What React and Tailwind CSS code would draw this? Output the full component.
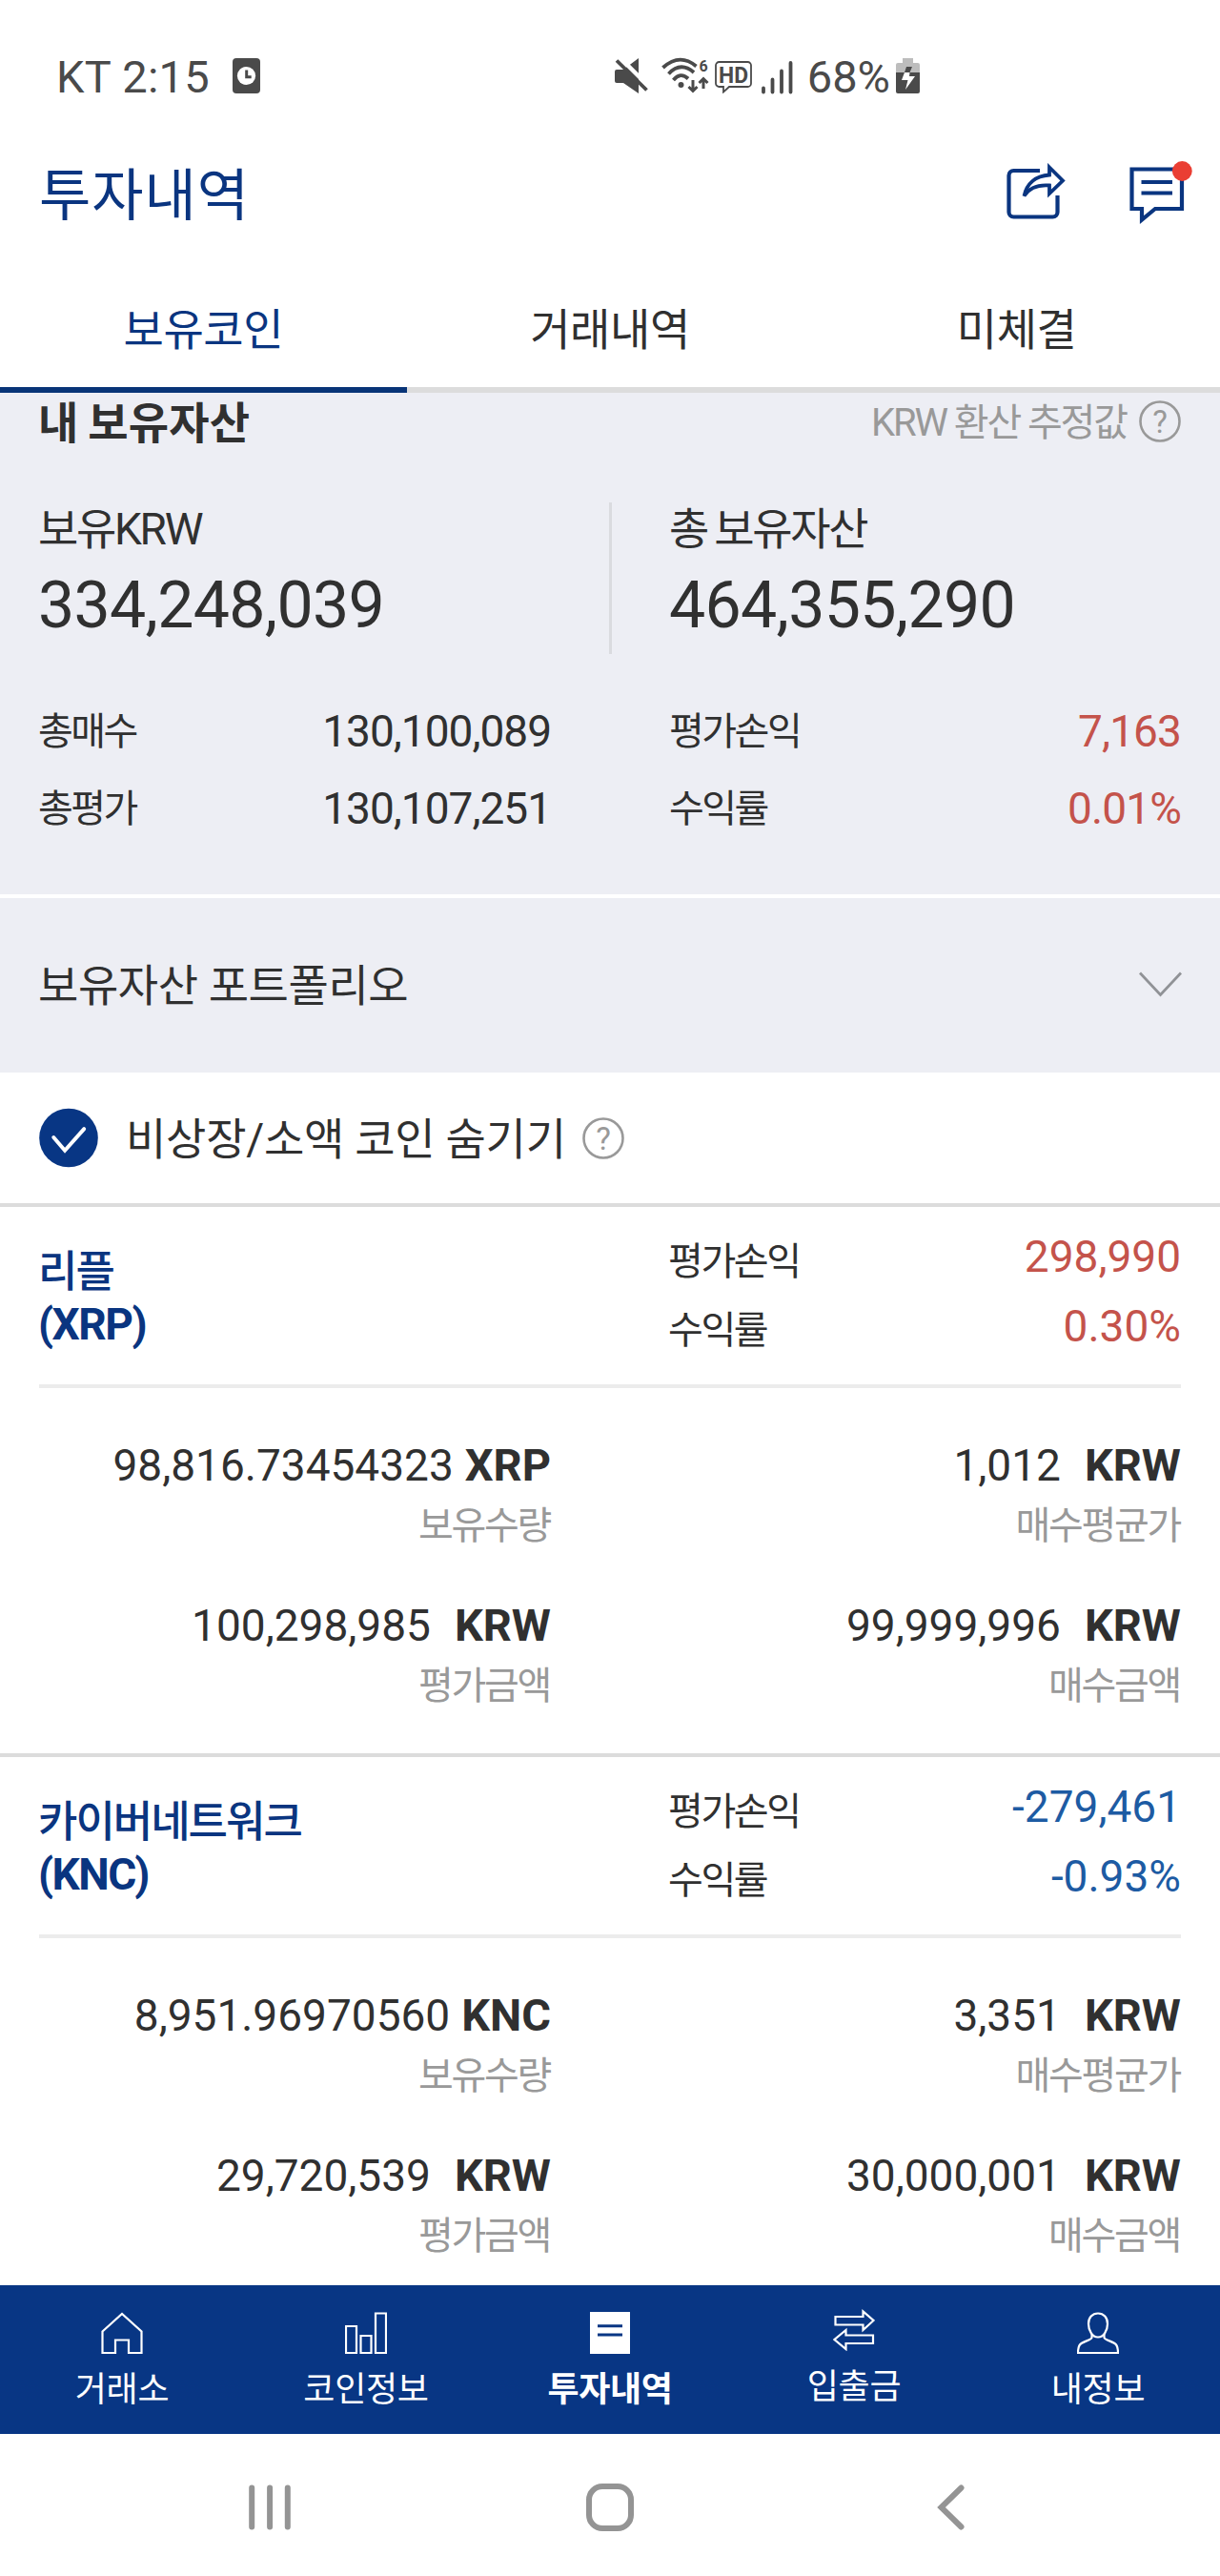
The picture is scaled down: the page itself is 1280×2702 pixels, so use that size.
const tabs = ['보유코인', '거래내역', '미체결']

const coins = [
  {
    name: '리플',
    symbol: 'XRP',
    profit: '298,990',
    rate: '0.30%',
    up: true,
    quantity: '98,816.73454323',
    avgPrice: '1,012',
    value: '100,298,985',
    cost: '99,999,996',
  },
  {
    name: '카이버네트워크',
    symbol: 'KNC',
    profit: '-279,461',
    rate: '-0.93%',
    up: false,
    quantity: '8,951.96970560',
    avgPrice: '3,351',
    value: '29,720,539',
    cost: '30,000,001',
  },
]

function StatusBar() {
  return (
    <div className="flex h-[162px] shrink-0 items-center pl-[59px] pr-[315px] text-[#4a4a4a]">
      <span className="pb-[2px] text-[47px] leading-none tracking-[0.3px]">KT 2:15</span>
      <svg className="ml-[24px] -mt-[3px]" width="29" height="37" viewBox="0 0 29 37">
        <rect width="29" height="37" rx="4" fill="currentColor" />
        <circle cx="14.5" cy="18.5" r="9.6" fill="#fff" />
        <path d="M14.7 12.5v7.2h5" fill="none" stroke="currentColor" strokeWidth="3" />
      </svg>

      <svg className="ml-auto -mt-[3px]" width="35" height="37" viewBox="0 0 35 37">
        <path d="M2 12h7L25 0v37L9 26H2a2 2 0 0 1-2-2V14a2 2 0 0 1 2-2Z" fill="currentColor" />
        <path d="M5-1l31 31" stroke="#fff" strokeWidth="4.5" />
        <path d="M2 2.5l31.5 31" stroke="currentColor" strokeWidth="3.8" />
      </svg>
      <svg className="ml-[14px] -mt-[3px] overflow-visible" width="50" height="37" viewBox="0 0 50 37">
        <g fill="none" stroke="currentColor" strokeWidth="3.8">
          <path d="M1.5 10Q19-6 36.5 8.5" />
          <path d="M7.5 16.5Q20 3 34 15" />
          <path d="M12.5 23Q20 14 28 21.5" />
        </g>
        <circle cx="20.5" cy="28" r="3" fill="currentColor" />
        <path d="M33 23v11M28.5 30l4.5 4.5 4.5-4.5M44 32V22M39.5 26l4.5-4.5 4.5 4.5" fill="none" stroke="currentColor" strokeWidth="3" />
        <text x="39.5" y="13.5" fontSize="16" fontWeight="700" fill="currentColor">6</text>
      </svg>
      <svg className="ml-[6px]" width="39" height="34" viewBox="0 0 39 34">
        <path d="M4.5 1h30a3.5 3.5 0 0 1 3.5 3.5v19a3.5 3.5 0 0 1-3.5 3.5H15l-6 5.500V27H4.5A3.5 3.5 0 0 1 1 23.5v-19A3.5 3.5 0 0 1 4.5 1Z" fill="none" stroke="currentColor" strokeWidth="1.8" />
        <text x="19.5" y="22.5" textAnchor="middle" fontSize="24" fontWeight="700" fill="currentColor" textLength="31" lengthAdjust="spacingAndGlyphs">HD</text>
      </svg>
      <svg className="ml-[10px]" width="33" height="35" viewBox="0 0 33 35" stroke="currentColor" strokeWidth="3.8" strokeLinecap="round">
        <path d="M2 28.5v4M11.5 19.5v13M21 10.5v22M30.5 2v30.5" />
      </svg>
      <span className="ml-[15px] mr-px pb-[2px] text-[47px] leading-none">68%</span>
      <svg className="ml-[5px] -mt-[3px]" width="25" height="37" viewBox="0 0 25 37">
        <path d="M7 0h11v5h5a2 2 0 0 1 2 2v8H0V7a2 2 0 0 1 2-2h5Z" fill="#bdbdbd" />
        <path d="M0 15h25v20a2 2 0 0 1-2 2H2a2 2 0 0 1-2-2Z" fill="currentColor" />
        <path d="M11 9h6l-2.5 6H9Z" fill="currentColor" />
        <path d="M9 15h5.5l-.5 4h6L10 33l2.5-10H6Z" fill="#fff" />
      </svg>
    </div>
  )
}

function Header() {
  return (
    <header className="flex h-[88px] shrink-0 items-center pl-[41px] pr-[29px] text-[#0a3580]">
      <h1 className="pb-[2px] text-[59px] leading-none tracking-[1px]">투자내역</h1>
      <svg className="ml-auto mb-[10px]" width="62" height="60" viewBox="0 0 62 60" fill="none" stroke="currentColor">
        <path d="M35 8H7.5a5 5 0 0 0-5 5v38.5a5 5 0 0 0 5 5h41a5 5 0 0 0 5-5V34" strokeWidth="4.2" />
        <path d="M45 4.5L59 18.5 45 32v-8.5C33 22.5 24 26 18.5 34.5 21 22 30 13.5 45 12.5Z" strokeWidth="3.8" />
      </svg>
      <svg className="ml-[66px] mb-[8px]" width="67" height="66" viewBox="0 0 67 66" fill="none" stroke="currentColor" strokeWidth="4.2">
        <path d="M3.5 8.5h52.5v41.5h-28L14 61.5V50H3.5Z" />
        <path d="M13.5 22H46M13.5 33.5H46" />
        <circle cx="56.3" cy="10.5" r="10.4" fill="#ea3e33" stroke="none" />
      </svg>
    </header>
  )
}

function Tabs() {
  return (
    <div className="mt-[37px] grid shrink-0 grid-cols-3 text-center text-[46px] leading-[118px] tracking-[-0.4px]">
      {tabs.map((tab, i) => (
        <div
          key={tab}
          className={i === 0 ? 'border-b-[6px] border-[#083477] pb-px text-[#0a3580]' : 'border-b-[6px] border-[#dcdcdc] pb-px'}
        >
          {tab}
        </div>
      ))}
    </div>
  )
}

function Help() {
  return (
    <svg width="44" height="44" viewBox="0 0 44 44" className="text-[#999]">
      <circle cx="22" cy="22" r="20.5" fill="none" stroke="currentColor" strokeWidth="2.6" />
      <text x="22" y="34" textAnchor="middle" fontSize="33" fill="currentColor">?</text>
    </svg>
  )
}

function Row({ label, value, red }) {
  return (
    <div className="flex h-[81px] items-center justify-between">
      <span className="text-[40px] tracking-[-2.5px]">{label}</span>
      <span className={red ? 'pr-px text-[46px] tracking-[-0.9px] text-[#c4534b]' : 'text-[46px] tracking-[-1px]'}>{value}</span>
    </div>
  )
}

function Total({ label, value }) {
  return (
    <div className="w-[538px] pt-[2px]">
      <p className="text-[46px] leading-[52px] tracking-[-2.3px] [word-spacing:-2px]">{label}</p>
      <p className="mt-[14px] text-[68px] leading-[80px] tracking-[-0.7px]">{value}</p>
    </div>
  )
}

function Summary() {
  return (
    <section className="shrink-0 border-b-4 border-white bg-[#edeef4] px-10 pb-[49px]">
      <div className="flex h-[65px] items-center">
        <h2 className="pb-[2px] text-[46px] font-bold leading-none tracking-[0.2px] [word-spacing:-2px]">내 보유자산</h2>
        <span className="ml-auto mr-[13px] pb-[2px] text-[40px] leading-none tracking-[-2.1px] text-[#999]">KRW 환산 추정값</span>
        <div className="mr-px mb-[6px]">
          <Help />
        </div>
      </div>
      <div className="mt-[50px] flex h-[159px] justify-between">
        <Total label="보유KRW" value="334,248,039" />
        <div className="w-[3px] bg-[#dadbdf]" />
        <Total label="총 보유자산" value="464,355,290" />
      </div>
      <div className="mt-[41px] flex justify-between">
        <div className="w-[538px]">
          <Row label="총매수" value="130,100,089" />
          <Row label="총평가" value="130,107,251" />
        </div>
        <div className="w-[538px]">
          <Row label="평가손익" value="7,163" red />
          <Row label="수익률" value="0.01%" red />
        </div>
      </div>
    </section>
  )
}

function Amount({ value, unit, label }) {
  return (
    <div className="w-[537px] text-right">
      <p className="text-[46px] leading-[60px]">
        {value}
        <b className={unit === 'KRW' ? 'ml-[25px] text-[47px]' : 'ml-[12px] text-[47px]'}>{unit}</b>
      </p>
      <p className="mt-[10px] pr-px text-[40px] leading-[48px] tracking-[-2.3px] text-[#999]">{label}</p>
    </div>
  )
}

function Coin({ coin }) {
  return (
    <section className="shrink-0 border-t-4 border-[#dcdcdc] px-[41px] pb-[46px]">
      <div className="flex h-[190px] justify-between border-b-4 border-[#ececec]">
        <div className="-ml-px pt-[42px] font-bold leading-[54px] text-[#0a3580]">
          <p className="text-[45px] font-medium tracking-[-2px]">{coin.name}</p>
          <p className="text-[46px] tracking-[-1.5px]">({coin.symbol})</p>
        </div>
        <div className="flex w-[538px] justify-between leading-[72px]">
          <div className="pt-[22px] text-[40px] tracking-[-2.4px]">
            <p>평가손익</p>
            <p>수익률</p>
          </div>
          <div className={coin.up ? 'pt-[16px] text-right text-[46px] text-[#c4534b]' : 'pt-[16px] text-right text-[46px] text-[#1d5ba3]'}>
            <p>{coin.profit}</p>
            <p className="pt-px">{coin.rate}</p>
          </div>
        </div>
      </div>
      <div className="flex flex-wrap justify-between gap-y-[50px] pt-[51px]">
        <Amount value={coin.quantity} unit={coin.symbol} label="보유수량" />
        <Amount value={coin.avgPrice} unit="KRW" label="매수평균가" />
        <Amount value={coin.value} unit="KRW" label="평가금액" />
        <Amount value={coin.cost} unit="KRW" label="매수금액" />
      </div>
    </section>
  )
}

function NavItem({ label, active, raised, children }) {
  return (
    <div className={raised ? '-mt-[3px] flex flex-1 flex-col items-center' : 'flex flex-1 flex-col items-center'}>
      <svg width="44" height="44" viewBox="0 0 44 44" fill="none" stroke="currentColor" strokeWidth="2.2">
        {children}
      </svg>
      <span className={active ? 'mt-[18px] text-[36px] font-bold leading-[40px] tracking-[-0.4px]' : 'mt-[18px] text-[36px] leading-[40px] tracking-[-0.3px]'}>
        {label}
      </span>
    </div>
  )
}

function BottomNav() {
  return (
    <nav className="flex h-[156px] shrink-0 bg-[#083684] pt-[28px] text-white">
      <NavItem label="거래소">
        <path d="M1.5 20.5L22 2l20.5 18.5V43H29V29.5H15V43H1.5Z" />
      </NavItem>
      <NavItem label="코인정보">
        <path d="M1 15h11v28H1ZM16.5 25h11v18h-11ZM32 1.5h11V43H32Z" />
      </NavItem>
      <NavItem label="투자내역" active>
        <path d="M1 0h42v44H1Z" fill="currentColor" stroke="none" />
        <path d="M9 14.7h26M9 24h26" stroke="#083684" strokeWidth="3" />
      </NavItem>
      <NavItem label="입출금" raised>
        <path d="M2.5 8h29V2.5L42.5 12l-11 10v-5.5h-29ZM42 27.5H13.5V22L1.5 32l12 10v-6H42Z" />
      </NavItem>
      <NavItem label="내정보">
        <path d="M22 1.5c-6 0-10 4.5-10 11 0 7 4 14 10 14s10-7 10-14c0-6.5-4-11-10-11Z" />
        <path d="M15.5 23v4c0 2-7 3.5-11 6C2 34.5 1 37 1 43h42c0-6-1-8.5-3.5-10-4-2.5-11-4-11-6v-4" />
      </NavItem>
    </nav>
  )
}

function SystemNav() {
  return (
    <div className="flex h-[149px] shrink-0 items-center pt-[4px] pl-[261px] pr-[268px] text-[#949494]">
      <svg width="44" height="48" viewBox="0 0 44 48" stroke="currentColor" strokeWidth="6" strokeLinecap="round">
        <path d="M3.2 3.5v41M22.1 3.5v41M40.8 3.5v41" />
      </svg>
      <div className="ml-[310px] h-[50px] w-[50px] rounded-[17px] border-[6px] border-current" />
      <svg className="ml-auto" width="29" height="48" viewBox="0 0 29 48" fill="none" stroke="currentColor" strokeWidth="6" strokeLinecap="round">
        <path d="M25.5 3.5L4.5 24l21 20.5" />
      </svg>
    </div>
  )
}

export default function App() {
  return (
    <div className="flex h-[2702px] w-[1280px] flex-col bg-white font-['Roboto','Noto_Sans_CJK_KR',sans-serif] text-[#303030]">
      <StatusBar />
      <Header />
      <Tabs />
      <main className="flex min-h-0 flex-1 flex-col overflow-hidden">
        <Summary />
        <div className="flex h-[183px] shrink-0 items-center justify-between bg-[#edeef4] px-10">
          <span className="pt-[2px] text-[46px] tracking-[-0.4px]">보유자산 포트폴리오</span>
          <svg className="mb-[2px]" width="45" height="27" viewBox="0 0 45 27" fill="none" stroke="#909296" strokeWidth="2.8">
            <path d="M1 1.5l21.5 23L44 1.5" />
          </svg>
        </div>
        <div className="flex h-[137px] shrink-0 items-center px-[41px]">
          <svg width="62" height="63" viewBox="0 0 63 63">
            <circle cx="31.5" cy="31.5" r="31.3" fill="#083684" />
            <path d="M15.5 31l12 14L48 22" fill="none" stroke="#fff" strokeWidth="4" strokeLinecap="round" />
          </svg>
          <span className="ml-[29px] mr-[17px] pt-[3px] text-[46px] tracking-[-0.25px]">비상장/소액 코인 숨기기</span>
          <Help />
        </div>
        {coins.map((coin) => (
          <Coin key={coin.symbol} coin={coin} />
        ))}
      </main>
      <BottomNav />
      <SystemNav />
    </div>
  )
}
